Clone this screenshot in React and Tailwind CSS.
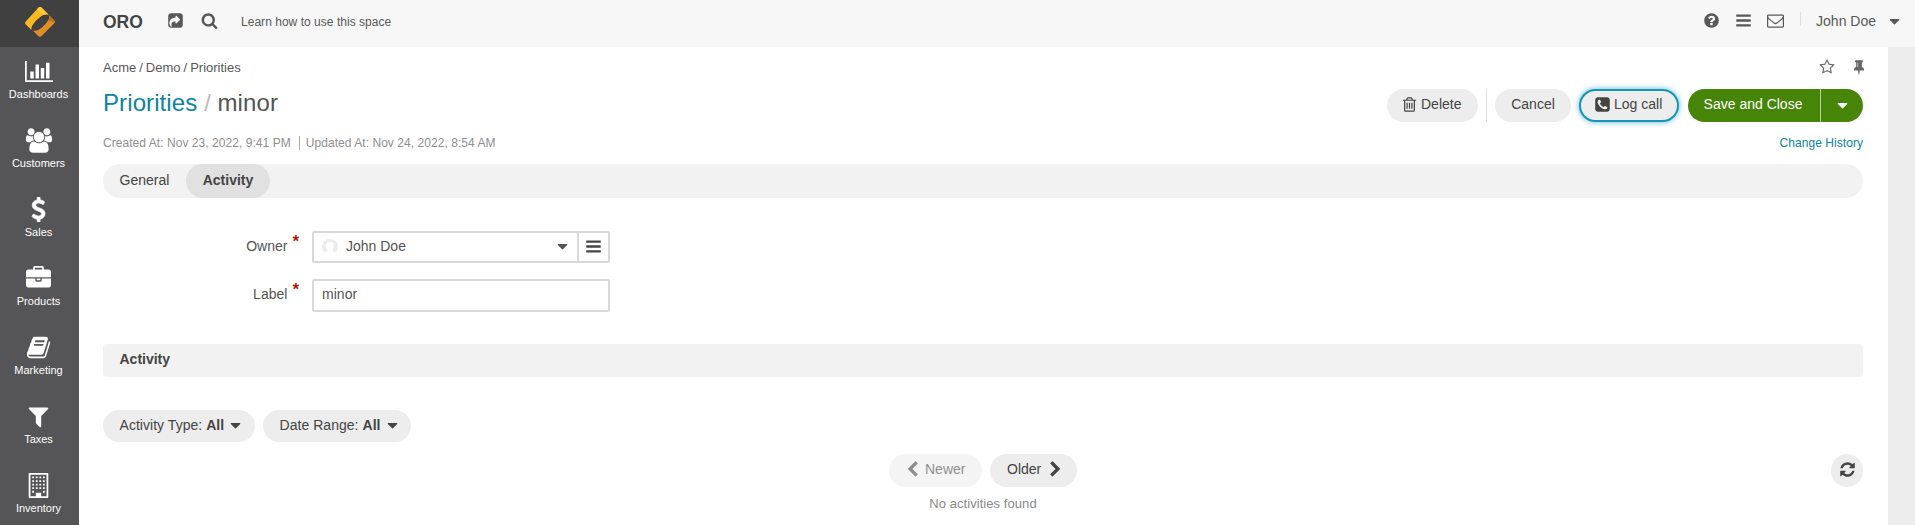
import React from 'react';

const PATHS = {
  question:
    'M1024 1376v-192q0-14-9-23t-23-9h-192q-14 0-23 9t-9 23v192q0 14 9 23t23 9h192q14 0 23-9t9-23zm256-672q0-88-55.5-163t-138.5-116-170-41q-243 0-371 213-15 24 8 42l132 100q7 6 19 6 16 0 25-12 53-68 86-92 34-24 86-24 48 0 85.5 26t37.5 59q0 38-20 61t-68 45q-63 28-115.5 86.5t-52.5 125.5v36q0 14 9 23t23 9h192q14 0 23-9t9-23q0-19 21.5-49.5t54.5-49.5q32-18 49-28.5t46-35 44.5-48 28-60.5 12.5-81zm384 192q0 209-103 385.5t-279.5 279.5-385.5 103-385.5-103-279.5-279.5-103-385.5 103-385.5 279.5-279.5 385.5-103 385.5 103 279.5 279.5 103 385.5z',
  search:
    'M1216 832q0-185-131.5-316.5t-316.5-131.5-316.5 131.5-131.5 316.5 131.5 316.5 316.5 131.5 316.5-131.5 131.5-316.5zm512 832q0 52-38 90t-90 38q-54 0-90-38l-343-342q-179 124-399 124-143 0-273.5-55.5t-225-150-150-225-55.5-273.5 55.5-273.5 150-225 225-150 273.5-55.5 273.5 55.5 225 150 150 225 55.5 273.5q0 220-124 399l343 343q37 37 37 90z',
  share:
    'M1005 1197l352-352q19-19 19-45t-19-45l-352-352q-30-31-69-14-40 17-40 59v160q-119 0-216 19.5t-162.5 51-114 79-76.5 95.5-44.5 109-21.5 111.5-5 110.5q0 181 167 404 11 12 25 12 7 0 13-3 22-9 19-33-44-354 62-473 46-52 130-75.5t224-23.5v160q0 42 40 59 12 5 24 5 26 0 45-19zM1664 416v960q0 119-84.5 203.5t-203.5 84.5h-960q-119 0-203.5-84.5t-84.5-203.5v-960q0-119 84.5-203.5t203.5-84.5h960q119 0 203.5 84.5t84.5 203.5z',
  refresh:
    'M1639 1056q0 5-1 7-64 268-268 434.5t-478 166.5q-146 0-282.5-55t-243.5-157l-129 129q-19 19-45 19t-45-19-19-45v-448q0-26 19-45t45-19h448q26 0 45 19t19 45-19 45l-137 137q71 66 161 102t187 36q134 0 250-65t186-179q11-17 53-117 8-23 30-23h192q13 0 22.5 9.5t9.5 22.5zm25-800v448q0 26-19 45t-45 19h-448q-26 0-45-19t-19-45 19-45l138-138q-148-137-349-137-134 0-250 65t-186 179q-11 17-53 117-8 23-30 23h-199q-13 0-22.5-9.5t-9.5-22.5v-7q65-268 270-434.5t480-166.5q146 0 284 55.5t245 156.5l130-129q19-19 45-19t45 19 19 45z',
  left:
    'M1427 301l-531 531 531 531q19 19 19 45t-19 45l-166 166q-19 19-45 19t-45-19l-742-742q-19-19-19-45t19-45l742-742q19-19 45-19t45 19l166 166q19 19 19 45t-19 45z',
  right:
    'M1363 877l-742 742q-19 19-45 19t-45-19l-166-166q-19-19-19-45t19-45l531-531-531-531q-19-19-19-45t19-45l166-166q19-19 45-19t45 19l742 742q19 19 19 45t-19 45z',
  bars:
    'M1664 1344v128q0 26-19 45t-45 19h-1408q-26 0-45-19t-19-45v-128q0-26 19-45t45-19h1408q26 0 45 19t19 45zm0-512v128q0 26-19 45t-45 19h-1408q-26 0-45-19t-19-45v-128q0-26 19-45t45-19h1408q26 0 45 19t19 45zm0-512v128q0 26-19 45t-45 19h-1408q-26 0-45-19t-19-45v-128q0-26 19-45t45-19h1408q26 0 45 19t19 45z',
  caret:
    'M1408 704q0 26-19 45l-448 448q-19 19-45 19t-45-19l-448-448q-19-19-19-45t19-45 45-19h896q26 0 45 19t19 45z',
  filter:
    'M1595 295q17 41-14 70l-493 493v742q0 42-39 59-13 5-25 5-27 0-45-19l-256-256q-19-19-19-45v-486l-493-493q-31-29-14-70 17-39 59-39h1280q42 0 59 39z',
  trash:
    'M704 736v576q0 14-9 23t-23 9h-64q-14 0-23-9t-9-23v-576q0-14 9-23t23-9h64q14 0 23 9t9 23zm256 0v576q0 14-9 23t-23 9h-64q-14 0-23-9t-9-23v-576q0-14 9-23t23-9h64q14 0 23 9t9 23zm256 0v576q0 14-9 23t-23 9h-64q-14 0-23-9t-9-23v-576q0-14 9-23t23-9h64q14 0 23 9t9 23zm128 724v-948h-896v948q0 22 7 40.5t14.5 27 10.5 8.5h832q3 0 10.5-8.5t14.5-27 7-40.5zm-672-1076h448l-48-117q-7-9-17-11h-317q-10 2-17 11zm928 32v64q0 14-9 23t-23 9h-96v948q0 83-47 143.5t-113 60.5h-832q-66 0-113-58.5t-47-141.5v-952h-96q-14 0-23-9t-9-23v-64q0-14 9-23t23-9h309l70-167q15-37 54-63t79-26h320q40 0 79 26t54 63l70 167h309q14 0 23 9t9 23z',
  dollar:
    'M1362 1185q0 153-99.5 263.5t-258.5 136.5v175q0 14-9 23t-23 9h-135q-13 0-22.5-9.5t-9.5-22.5v-175q-66-9-127.5-31t-101.5-44.5-74-48-46.5-37.5-17.5-18q-17-21-2-41l103-135q7-10 23-12 15-2 24 9l2 2q113 99 243 125 37 8 74 8 81 0 142.5-43t61.5-122q0-28-15-53t-33.5-42-58.5-37.5-66-32-80-32.500q-39-16-61.500-25t-61.500-26.500-62.500-31-56.500-35.500-53.500-42.500-43.500-49-35.500-58-21-66.500-8.500-78q0-138 98-242t255-134v-180q0-13 9.500-22.500t22.500-9.500h135q14 0 23 9t9 23v176q57 6 110.500 23t87 33.500 63.500 37.500 39 29 15 14q17 18 5 38l-81 146q-8 15-23 16-14 3-27-7-3-3-14.500-12t-39-26.500-58.500-32-74.500-26-85.500-11.500q-95 0-155 43t-60 111q0 26 8.500 48t29.500 41.500 39.500 33 56 31 60.500 27 70 27.500q53 20 81 31.500t76 35 75.500 42.500 62 50 53 63.500 31.500 76.500 13 94z',
  briefcase:
    'M640 256h512v-128h-512v128zm1152 640v480q0 66-47 113t-113 47h-1472q-66 0-113-47t-47-113v-480h672v160q0 26 19 45t45 19h320q26 0 45-19t19-45v-160h672zm-768 0v128h-256v-128h256zm768-480v384h-1792v-384q0-66 47-113t113-47h352v-160q0-40 28-68t68-28h576q40 0 68 28t28 68v160h352q66 0 113 47t47 113z',
  book:
    'M1703 478q40 57 18 129l-275 906q-19 64-76.5 107.5t-122.5 43.5h-923q-77 0-148.5-53.5t-99.5-131.5q-24-67-2-127 0-4 3-27t4-37q1-8-3-21.5t-3-19.5q2-11 8-21t16.5-23.5 16.5-23.5q23-38 45-91.5t30-91.5q3-10 .5-30t-.5-28q3-11 17-28t17-23q21-36 42-92t25-90q1-9-2.5-32t.5-28q4-13 22-30.5t22-22.5q19-26 42.5-84.5t27.5-96.5q1-8-3-25.5t-2-26.5q2-8 9-18t18-23 17-21q8-12 16.5-30.5t15-35 16-36 19.5-32 26.5-23.5 36-11.5 47.5 5.5l-1 3q38-9 51-9h761q74 0 114 56t18 130l-274 906q-36 119-71.5 153.5t-128.5 34.5h-869q-27 0-38 15-11 16-1 43 24 70 144 70h923q29 0 56-15.5t35-41.5l300-987q7-22 5-57 38 15 59 43zm-1064 2q-4 13 2 22.5t20 9.5h608q13 0 25.5-9.5t16.5-22.5l21-64q4-13-2-22.5t-20-9.5h-608q-13 0-25.5 9.5t-16.5 22.5zm-83 256q-4 13 2 22.5t20 9.5h608q13 0 25.5-9.5t16.5-22.5l21-64q4-13-2-22.5t-20-9.5h-608q-13 0-25.5 9.5t-16.5 22.5z',
  chart:
    'M640 896v512h-256v-512h256zm384-512v1024h-256v-1024h256zm1024 1152v128h-2048v-1536h128v1408h1920zm-640-896v768h-256v-768h256zm384-384v1152h-256v-1152h256z',
  users:
    'M657 896q-162 5-265 128h-134q-82 0-138-40.5t-56-118.5q0-353 124-353 6 0 43.5 21t97.5 42.5 119 21.5q67 0 133-23-5 37-5 66 0 139 81 256zm1071 637q0 120-73 189.5t-194 69.5h-874q-121 0-194-69.5t-73-189.5q0-53 3.5-103.5t14-109 26.5-108.5 43-97.5 62-81 85.5-53.5 111.5-20q10 0 43 21.5t73 48 107 48 135 21.5 135-21.5 107-48 73-48 43-21.5q61 0 111.5 20t85.5 53.5 62 81 43 97.5 26.5 108.5 14 109 3.5 103.5zm-1024-1277q0 106-75 181t-181 75-181-75-75-181 75-181 181-75 181 75 75 181zm704 384q0 159-112.5 271.5t-271.5 112.5-271.5-112.5-112.5-271.5 112.5-271.5 271.5-112.5 271.5 112.5 112.5 271.5zm576 225q0 78-56 118.5t-138 40.5h-134q-103-123-265-128 81-117 81-256 0-29-5-66 66 23 133 23 59 0 119-21.5t97.5-42.5 43.5-21q124 0 124 353zm-128-609q0 106-75 181t-181 75-181-75-75-181 75-181 181-75 181 75 75 181z',
  envelope:
    'M1664 1504v-768q-32 36-69 66-268 206-426 338-51 43-83 67t-86.5 48.5-102.5 24.5h-2q-48 0-102.5-24.5t-86.5-48.5-83-67q-158-132-426-338-37-30-69-66v768q0 13 9.5 22.5t22.5 9.5h1472q13 0 22.5-9.5t9.5-22.5zm0-1051v-24.5l-.5-13-3-12.5-5.5-9-9-7.5-14-2.5h-1472q-13 0-22.5 9.5t-9.5 22.5q0 168 147 284 193 152 401 317 6 5 35 29.5t46 37.5 44.5 31.5 50.5 27.5 43 9h2q20 0 43-9t50.5-27.5 44.5-31.5 46-37.5 35-29.5q208-165 401-317 54-43 100.5-115.5t46.5-131.5zm128-37v1088q0 66-47 113t-113 47h-1472q-66 0-113-47t-47-113v-1088q0-66 47-113t113-47h1472q66 0 113 47t47 113z',
  star:
    'M1201 1004l306-297-422-62-189-382-189 382-422 62 306 297-73 421 378-199 377 199zm527-357q0 22-26 48l-363 354 86 500q1 7 1 20 0 50-41 50-19 0-40-12l-449-236-449 236q-22 12-40 12-21 0-31.5-14.5t-10.5-35.5q0-6 2-20l86-500-364-354q-25-27-25-48 0-37 56-46l502-73 225-455q19-41 49-41t49 41l225 455 502 73q56 9 56 46z',
  pin:
    'M800 864v-448q0-14-9-23t-23-9-23 9-9 23v448q0 14 9 23t23 9 23-9 9-23zm672 352q0 26-19 45t-45 19h-429l-51 483q-2 12-10.5 20.5t-20.5 8.5h-1q-27 0-32-27l-76-485h-404q-26 0-45-19t-19-45q0-123 78.5-221.5t177.5-98.5v-512q-52 0-90-38t-38-90 38-90 90-38h640q52 0 90 38t38 90-38 90-90 38v512q99 0 177.5 98.5t78.5 221.5z',
  phone:
    'M1408 1193q0-11-2-16-3-8-38.5-29.5t-88.5-49.5l-53-29q-5-3-19-13t-25-15-21-5q-18 0-47 32.5t-57 65.5-44 33q-7 0-16.5-3.5t-15.5-6.5-17-9.5-14-8.5q-99-55-170.5-126.5t-126.5-170.5q-2-3-8.5-14t-9.5-17-6.5-15.5-3.5-16.5q0-13 20.5-33.5t45-38.5 45-39.5 20.5-36.5q0-10-5-21t-15-25-13-19q-3-6-15-28.5t-25-45.5-26.5-47.5-25-40.5-16.5-18-16-2q-48 0-101 22-46 21-80 94.5t-34 130.5q0 16 2.5 34t5 30.5 9 33 10 29.5 12.5 33 11 30q60 164 216.5 320.5t320.5 216.5q6 2 30 11t33 12.5 29.5 10 33 9 30.5 5 34 2.5q57 0 130.5-34t94.5-80q22-53 22-101zM1664 416v960q0 119-84.5 203.5t-203.5 84.5h-960q-119 0-203.5-84.5t-84.5-203.5v-960q0-119 84.5-203.5t203.5-84.5h960q119 0 203.5 84.5t84.5 203.5z',
  building:
    'M256 0h1280q26 0 45 19t19 45v1664q0 26-19 45t-45 19h-1280q-26 0-45-19t-19-45v-1664q0-26 19-45t45-19zM1088 1664h384v-1536h-1152v1536h384v-224q0-13 9.5-22.5t22.5-9.5h320q13 0 22.5 9.5t9.5 22.5zM448 256h128v128h-128zM704 256h128v128h-128zM960 256h128v128h-128zM1216 256h128v128h-128zM448 512h128v128h-128zM704 512h128v128h-128zM960 512h128v128h-128zM1216 512h128v128h-128zM448 768h128v128h-128zM704 768h128v128h-128zM960 768h128v128h-128zM1216 768h128v128h-128zM448 1024h128v128h-128zM704 1024h128v128h-128zM960 1024h128v128h-128zM1216 1024h128v128h-128zM448 1280h128v128h-128zM1216 1280h128v128h-128z',
};

function Icon({ name, wide = false, className = '' }) {
  return (
    <svg
      viewBox={wide ? '0 0 2048 1792' : '0 0 1792 1792'}
      fill="currentColor"
      fillRule="evenodd"
      className={`shrink-0 ${className}`}
      aria-hidden="true"
    >
      <path d={PATHS[name]} />
    </svg>
  );
}

const NAV = [
  { label: 'Dashboards', icon: 'chart', wide: true },
  { label: 'Customers', icon: 'users', wide: true },
  { label: 'Sales', icon: 'dollar', bold: true },
  { label: 'Products', icon: 'briefcase' },
  { label: 'Marketing', icon: 'book' },
  { label: 'Taxes', icon: 'filter' },
  { label: 'Inventory', icon: 'building' },
];

function Sidebar() {
  return (
    <nav className="flex w-[79px] shrink-0 flex-col overflow-hidden bg-[#555557] text-white">
      <div className="flex h-[47px] shrink-0 items-start justify-center bg-[#404040] pt-[7px]">
        <svg viewBox="0 0 30 30" className="size-[30px]" aria-hidden="true">
          <path d="M13.600.600q1.400-1.200 2.900 0l7.300 7.300q-3.400-1.700-8.300 1.800-5.600 4-8.200 8.800-1.300 2.600-.9 4.600l-5.700-5.700q-1.300-1.400 0-2.800z" fill="#fbb91f" />
          <path d="M13.600.600q1.400-1.200 2.900 0l7.300 7.300q-2.200-1.200-5.200.1l-6.600-5.800z" fill="#fdca3c" />
          <path d="M23.800 7.900l5.500 5.500q1.300 1.400 0 2.800l-13 13q-1.400 1.200-2.800 0l-5.800-5.700q3.500 1.300 8.300-2.300 5.300-4 7.700-8.700 1.300-2.800.1-4.600z" fill="#df8f27" />
          <path d="M23.800 7.900l5.500 5.500q.9.900.5 2.100l-6.500-2.100q1.700-3.300.5-5.500z" fill="#b9741f" />
        </svg>
      </div>
      {NAV.map((item) => (
        <a key={item.label} className="flex h-[69px] w-[77px] shrink-0 flex-col items-center pt-3">
          <Icon
            name={item.icon}
            wide={item.wide}
            className={item.wide ? 'h-[25px] w-[28px]' : item.bold ? 'size-[25px] stroke-white stroke-[60px]' : 'size-[25px]'}
          />
          <span className="mt-[3px] text-[11px] leading-[15px]">{item.label}</span>
        </a>
      ))}
    </nav>
  );
}

function Header() {
  return (
    <header className="flex h-[47px] shrink-0 items-start bg-[#f7f7f7] pr-3 pl-6 text-[#585858]">
      <span className="mt-3 w-[64px] text-[17.5px] leading-5 font-bold text-[#444]">ORO</span>
      <Icon name="share" className="mt-3 size-[17px]" />
      <Icon name="search" className="mt-3 ml-[17px] size-[17px]" />
      <span className="mt-[13px] ml-[23px] text-[12px] leading-[18px] tracking-[0.03px]">Learn how to use this space</span>
      <div className="ml-auto flex items-start">
        <Icon name="question" className="mt-3 size-[17px]" />
        <Icon name="bars" className="mt-3 ml-[15px] size-[17px]" />
        <Icon name="envelope" className="mt-3 ml-[15px] size-[17px]" />
        <span className="mt-3 ml-4 h-[14px] w-px bg-[#ddd]" />
        <span className="mt-3 ml-[15px] text-sm leading-[18px]">John Doe</span>
        <Icon name="caret" className="mt-[13px] ml-[10px] size-[17px]" />
      </div>
    </header>
  );
}

function Pill({ className = '', children }) {
  return (
    <button className={`flex items-center rounded-full bg-[#ededed] text-sm whitespace-nowrap text-[#444] ${className}`}>
      {children}
    </button>
  );
}

function TitleRow() {
  return (
    <div className="flex h-[33px] items-start justify-between">
      <h1 className="mt-[-1px] flex text-[24px] leading-[30px] text-[#545454]">
        <span className="tracking-[0.1px] text-[#0c84a3]">Priorities</span>
        <span className="mr-[6.5px] ml-[7px] text-[#bbb]">/</span>
        <span className="tracking-[0.1px]">minor</span>
      </h1>
      <div className="flex h-[33px]">
        <Pill className="w-[91px] pb-[3px] pl-[14px]">
          <Icon name="trash" className="mr-[3px] size-[17px]" />
          Delete
        </Pill>
        <span className="mx-2 w-px bg-[#ddd]" />
        <Pill className="w-[76px] justify-center pb-[3px]">Cancel</Pill>
        <Pill className="ml-2 w-[100px] border-2 border-[#1396b8] pb-[3px] pl-[13px] shadow-[0_0_5px_1px_rgba(19,150,184,0.5)]">
          <Icon name="phone" className="mr-[3px] size-[17px]" />
          Log call
        </Pill>
        <div className="ml-[9px] flex overflow-hidden rounded-full bg-[#468508] text-sm text-white">
          <button className="w-[132px] pr-0.5 pb-[3px]">Save and Close</button>
          <button className="flex w-[43px] items-center justify-center border-l border-[#b5ce9c]">
            <Icon name="caret" className="size-[17px]" />
          </button>
        </div>
      </div>
    </div>
  );
}

function FieldLabel({ children }) {
  return (
    <div className="flex w-[209px] shrink-0 items-start justify-end pr-[13px] text-sm text-[#545454]">
      <span className="mt-[6px] leading-[18px]">{children}</span>
      <span className="mt-px ml-[5px] text-[17px] leading-[20px] font-bold text-[#b0190b]">*</span>
    </div>
  );
}

function Form() {
  return (
    <div className="mt-[33px] flex flex-col gap-4 text-sm text-[#545454]">
      <div className="flex h-8">
        <FieldLabel>Owner</FieldLabel>
        <div className="flex w-[298px] rounded-[2px] border-2 border-[#d9d9d9]">
          <div className="flex flex-1 items-start pl-2">
            <svg viewBox="0 0 16 16" className="mt-[6px] size-4" aria-hidden="true">
              <circle cx="8" cy="8" r="8" fill="#ececec" />
              <path d="M8 2.700a4 4 0 0 1 4 4q0 2.600-1.500 4v1.300l3 1.600v2.400h-11v-2.400l3-1.600v-1.300q-1.500-1.400-1.500-4a4 4 0 0 1 4-4z" fill="#fff" />
            </svg>
            <span className="mt-1 ml-2 leading-[18px]">John Doe</span>
            <Icon name="caret" className="mt-[5px] mr-[6px] ml-auto size-[17px]" />
          </div>
          <div className="flex w-[31px] items-start justify-center border-l-2 border-[#d9d9d9] pt-[5px] text-[#444]">
            <Icon name="bars" className="size-[17px]" />
          </div>
        </div>
      </div>
      <div className="flex h-[33px]">
        <FieldLabel>Label</FieldLabel>
        <div className="w-[298px] rounded-[2px] border-2 border-[#d9d9d9] pt-1 pl-2 leading-[18px] tracking-[0.05px]">minor</div>
      </div>
    </div>
  );
}

function Pager() {
  return (
    <div className="mt-3 grid h-[33px] grid-cols-[1fr_auto_1fr]">
      <span />
      <div className="flex gap-2">
        <Pill className="w-[93px] pb-[3px] pl-[15px] opacity-60">
          <Icon name="left" className="mr-1 size-[17px]" />
          Newer
        </Pill>
        <Pill className="w-[87px] pb-[3px] pl-[17px]">
          Older
          <Icon name="right" className="ml-1.5 size-[17px]" />
        </Pill>
      </div>
      <Pill className="w-8 justify-center justify-self-end pb-0.5">
        <Icon name="refresh" className="size-[17px]" />
      </Pill>
    </div>
  );
}

export default function App() {
  return (
    <div className="flex h-[525px] w-full overflow-hidden bg-white font-['Liberation_Sans',Arial,sans-serif]">
      <Sidebar />
      <div className="flex min-w-0 flex-1 flex-col">
        <Header />
        <div className="flex min-h-0 flex-1">
          <main className="min-w-0 flex-1 pr-[25px] pl-6">
            <div className="flex h-[42px] items-start justify-between text-[#585858]">
              <div className="mt-3 flex gap-[3px] text-[13px] leading-[18px]">
                <span>Acme</span>
                <span>/</span>
                <span>Demo</span>
                <span>/</span>
                <span>Priorities</span>
              </div>
              <div className="mt-3 mr-[-4px] flex gap-4 text-[#666]">
                <Icon name="star" className="size-4" />
                <Icon name="pin" className="size-4" />
              </div>
            </div>
            <TitleRow />
            <div className="mt-3 flex h-[30px] items-start text-[12px] leading-[18px] tracking-[0.05px] text-[#8f8f8f]">
              <span>Created At: Nov 23, 2022, 9:41 PM</span>
              <span className="mt-0.5 mr-[6px] ml-[8px] h-[14px] w-px bg-[#aaa]" />
              <span>Updated At: Nov 24, 2022, 8:54 AM</span>
              <a className="ml-auto text-[#0c84a3]">Change History</a>
            </div>
            <div className="flex h-[34px] rounded-full bg-[#f2f2f2] text-sm text-[#444]">
              <span className="w-[83px] pt-[7px] pl-[16.5px] leading-[18px]">General</span>
              <span className="w-[84px] rounded-full bg-[#e1e1e1] pt-[7px] text-center leading-[18px] font-bold">
                Activity
              </span>
            </div>
            <Form />
            <div className="mt-8 h-[33px] rounded bg-[#f2f2f2] pt-[6px] pl-[16.5px] text-sm leading-[18px] font-bold text-[#444]">
              Activity
            </div>
            <div className="mt-[33px] flex h-8 gap-2">
              <Pill className="w-[152px] pb-0.5 pl-[16.5px]">
                <span className="tracking-[0.04px]">
                  Activity Type: <b>All</b>
                </span>
                <Icon name="caret" className="ml-[3px] size-[17px]" />
              </Pill>
              <Pill className="w-[148px] pb-0.5 pl-[16.5px]">
                <span className="tracking-[0.04px]">
                  Date Range: <b>All</b>
                </span>
                <Icon name="caret" className="ml-[3px] size-[17px]" />
              </Pill>
            </div>
            <Pager />
            <p className="mt-2 text-center text-[13px] leading-[18px] tracking-[0.06px] text-[#888]">No activities found</p>
          </main>
          <aside className="w-[27px] shrink-0 bg-[#ededed]" />
        </div>
      </div>
    </div>
  );
}
